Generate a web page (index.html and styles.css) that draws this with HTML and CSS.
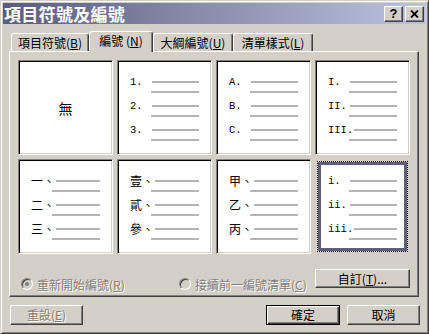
FILE: index.html
```html
<!DOCTYPE html>
<html lang="zh-Hant">
<head>
  <meta charset="UTF-8" />
  <title>項目符號及編號</title>
  <link rel="stylesheet" href="styles.css">
</head>
<body>
  <div class="dialog">
    <div class="caption">
      <span class="title">項目符號及編號</span>
      <span class="cbtn help">?</span>
      <span class="cbtn close">
        <svg width="9" height="8" viewBox="0 0 9 8"><path d="M1 0.5 L8 7.5 M8 0.5 L1 7.5" stroke="#000" stroke-width="1.8" fill="none"/></svg>
      </span>
    </div>

    <div class="tabs">
      <div class="tab t1">項目符號(<u>B</u>)</div>
      <div class="tab t2 active">編號 (<u>N</u>)</div>
      <div class="tab t3">大綱編號(<u>U</u>)</div>
      <div class="tab t4">清單樣式(<u>L</u>)</div>
    </div>

    <div class="panel">
      <div class="grid">
        <div class="cell none">無</div>

        <div class="cell">
          <div class="item"><div class="first"><span class="num">1.</span><i></i></div><i class="second"></i></div>
          <div class="item"><div class="first"><span class="num">2.</span><i></i></div><i class="second"></i></div>
          <div class="item"><div class="first"><span class="num">3.</span><i></i></div><i class="second"></i></div>
        </div>

        <div class="cell">
          <div class="item"><div class="first"><span class="num">A.</span><i></i></div><i class="second"></i></div>
          <div class="item"><div class="first"><span class="num">B.</span><i></i></div><i class="second"></i></div>
          <div class="item"><div class="first"><span class="num">C.</span><i></i></div><i class="second"></i></div>
        </div>

        <div class="cell">
          <div class="item"><div class="first"><span class="num">I.</span><i></i></div><i class="second"></i></div>
          <div class="item"><div class="first"><span class="num">II.</span><i></i></div><i class="second"></i></div>
          <div class="item"><div class="first"><span class="num">III.</span><i></i></div><i class="second"></i></div>
        </div>

        <div class="cell">
          <div class="item"><div class="first"><span class="han">一、</span><i></i></div><i class="second"></i></div>
          <div class="item"><div class="first"><span class="han">二、</span><i></i></div><i class="second"></i></div>
          <div class="item"><div class="first"><span class="han">三、</span><i></i></div><i class="second"></i></div>
        </div>

        <div class="cell">
          <div class="item"><div class="first"><span class="han">壹、</span><i></i></div><i class="second"></i></div>
          <div class="item"><div class="first"><span class="han">貳、</span><i></i></div><i class="second"></i></div>
          <div class="item"><div class="first"><span class="han">參、</span><i></i></div><i class="second"></i></div>
        </div>

        <div class="cell">
          <div class="item"><div class="first"><span class="han">甲、</span><i></i></div><i class="second"></i></div>
          <div class="item"><div class="first"><span class="han">乙、</span><i></i></div><i class="second"></i></div>
          <div class="item"><div class="first"><span class="han">丙、</span><i></i></div><i class="second"></i></div>
        </div>

        <div class="cell sel">
          <div class="item"><div class="first"><span class="num">i.</span><i></i></div><i class="second"></i></div>
          <div class="item"><div class="first"><span class="num">ii.</span><i></i></div><i class="second"></i></div>
          <div class="item"><div class="first"><span class="num">iii.</span><i></i></div><i class="second"></i></div>
        </div>
      </div>

      <div class="options">
        <label class="radio r1"><span class="dot checked"></span>重新開始編號(<u>R</u>)</label>
        <label class="radio r2"><span class="dot"></span>接續前一編號清單(<u>C</u>)</label>
        <button class="btn custom">自訂(<u>T</u>)...</button>
      </div>
    </div>

    <div class="footer">
      <button class="btn reset" disabled>重設(<u>E</u>)</button>
      <button class="btn ok">確定</button>
      <button class="btn cancel">取消</button>
    </div>
  </div>
</body>
</html>
```

FILE: styles.css
```css
* {
  margin: 0;
  padding: 0;
  box-sizing: border-box;
}
body {
  background: #d4d0c8;
  font-family: "Noto Sans CJK TC", "Noto Sans CJK SC", sans-serif;
  font-size: 12px;
  color: #000;
}
u {
  text-decoration: underline;
}

/* window frame */
.dialog {
  width: 429px;
  height: 334px;
  background: #d4d0c8;
  border: 1px solid;
  border-color: #d4d0c8 #404040 #404040 #d4d0c8;
  box-shadow: inset 1px 1px #fff, inset -1px -1px #808080;
  padding: 2px;
}

.caption {
  height: 21px;
  display: flex;
  align-items: center;
  padding: 0 2px 0 1px;
  background: linear-gradient(to right, #5c5c7e, #bcc3e1);
}
.caption .title {
  flex: 1;
  color: #fff;
  font-weight: bold;
  font-size: 17px;
  line-height: 21px;
  letter-spacing: 0.3px;
}
.cbtn {
  width: 19px;
  height: 16px;
  margin-left: 2px;
  display: flex;
  align-items: center;
  justify-content: center;
  background: #d4d0c8;
  border: 1px solid;
  border-color: #fff #404040 #404040 #fff;
  box-shadow: inset -1px -1px #808080;
  font-family: "Liberation Sans", sans-serif;
  font-weight: bold;
  font-size: 13px;
  line-height: 1;
}

/* tabs */
.tabs {
  display: flex;
  align-items: flex-end;
  height: 20px;
  margin: 7px 0 0 8px;
}
.tab {
  height: 18px;
  border: 1px solid;
  border-bottom: none;
  border-color: #fff #404040 #404040 #fff;
  border-radius: 3px 3px 0 0;
  box-shadow: inset -1px 0 #808080;
  display: flex;
  align-items: center;
  justify-content: center;
  line-height: 1;
}
.t1 { width: 78px; }
.t2 { width: 64px; }
.t3 { width: 80px; }
.t4 { width: 80px; }
.tab.active {
  height: 21px;
  margin-bottom: -1px;
  padding-bottom: 2px;
  position: relative;
  z-index: 1;
  background: #d4d0c8;
}

/* panel */
.panel {
  width: 410px;
  height: 246px;
  margin-left: 6px;
  border: 1px solid;
  border-color: #fff #404040 #404040 #fff;
  box-shadow: inset -1px -1px #808080;
  padding: 8px 8px 0 8px;
}
.grid {
  display: grid;
  grid-template-columns: repeat(4, 95px);
  grid-auto-rows: 95px;
  gap: 4px;
}
.cell {
  background: #fff;
  border: 1px solid;
  border-color: #808080 #fff #fff #808080;
  box-shadow: inset 1px 1px #000, inset -1px -1px #d4d0c8;
  padding: 15px 0 0 12px;
  display: flex;
  flex-direction: column;
  gap: 7px;
}
.cell.none {
  padding: 0;
  align-items: center;
  justify-content: center;
  font-size: 14px;
}
.cell.sel {
  margin: 3px;
  border: 3px solid #5e5e78;
  box-shadow: none;
  outline: 1px dotted #000;
  padding: 10px 0 0 7px;
}

.item {
  width: 69px;
  display: flex;
  flex-direction: column;
}
.item .first {
  height: 12px;
  display: flex;
  align-items: center;
}
.item .first i {
  flex: 1;
  height: 2px;
  margin-left: 1px;
  background: #b4b4b4;
}
.item .second {
  display: block;
  width: 48px;
  height: 2px;
  margin: 3px 0 0 21px;
  background: #b4b4b4;
}
.num {
  min-width: 21px;
  font-family: "Liberation Mono", monospace;
  font-size: 10.5px;
  line-height: 12px;
}
.han {
  min-width: 21px;
  font-size: 12px;
  line-height: 12px;
}

/* options row */
.options {
  display: flex;
  align-items: center;
  height: 19px;
  margin-top: 15px;
}
.radio {
  display: flex;
  align-items: center;
  align-self: flex-end;
  height: 16px;
  margin-bottom: -4px;
  color: #808080;
  text-shadow: 1px 1px #fff;
}
.r1 {
  width: 158px;
  margin-left: 3px;
}
.dot {
  width: 12px;
  height: 12px;
  margin-right: 4px;
  border-radius: 50%;
  border: 1px solid;
  border-color: #808080 #fff #fff #808080;
  box-shadow: inset 1px 1px #404040;
  background: #d4d0c8;
  display: flex;
  align-items: center;
  justify-content: center;
}
.dot.checked::after {
  content: "";
  width: 4px;
  height: 4px;
  border-radius: 50%;
  background: #808080;
}

/* buttons */
.btn {
  height: 20px;
  background: #d4d0c8;
  border: 1px solid;
  border-color: #fff #404040 #404040 #fff;
  box-shadow: inset -1px -1px #808080;
  font-family: "Noto Sans CJK TC", sans-serif;
  font-size: 12px;
  line-height: 1;
  color: #000;
}
.btn.custom {
  width: 95px;
  height: 19px;
  margin-left: auto;
}
.btn:disabled {
  color: #808080;
  text-shadow: 1px 1px #fff;
}

.footer {
  display: flex;
  margin-top: 8px;
  padding: 0 6px 0 7px;
}
.btn.reset { width: 73px; }
.btn.ok {
  width: 74px;
  margin-left: auto;
  border: 1px solid #000;
  box-shadow: inset 1px 1px #fff, inset -1px -1px #404040, inset -2px -2px #808080;
}
.btn.cancel {
  width: 73px;
  margin-left: 7px;
}
```
